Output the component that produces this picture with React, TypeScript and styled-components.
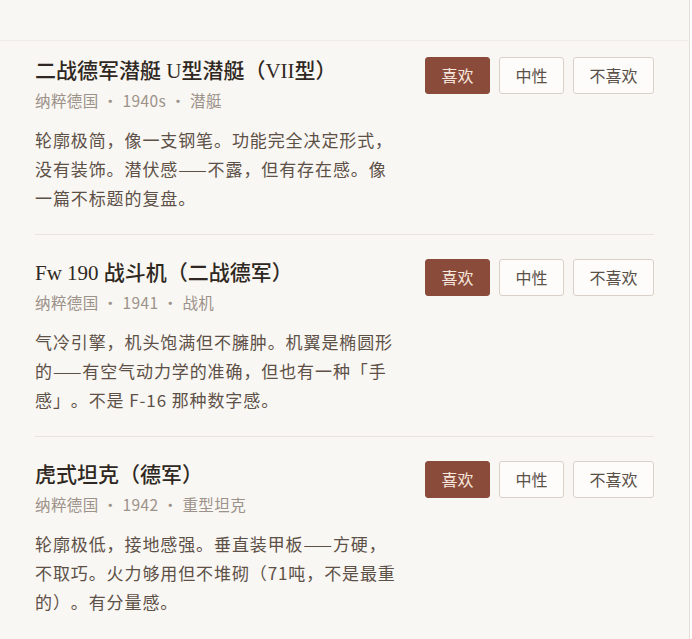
import React from "react";
import styled, { createGlobalStyle } from "styled-components";

const Global = createGlobalStyle`
  html, body { margin: 0; padding: 0; background: #ffffff; }
  body {
    font-family: "Noto Sans CJK SC", "Noto Sans", sans-serif;
    text-spacing-trim: space-all;
  }
`;

const Page = styled.div`
  width: 690px;
  min-height: 639px;
  background: #f9f7f3;
  border-right: 1px solid #e4dfd8;
  box-sizing: border-box;
`;

const TopStrip = styled.div`
  height: 41px;
  border-bottom: 1px solid #f0ece6;
  box-sizing: border-box;
`;

const List = styled.div`
  display: flex;
  flex-direction: column;
  padding: 0 35px 0 35px;
`;

const Item = styled.div`
  display: flex;
  justify-content: space-between;
  align-items: flex-start;
  padding: 24px 0 22px;
  border-bottom: 1px solid #e9e4dd;
  &:first-child { padding-top: 16px; }
  &:last-child { border-bottom: none; }
`;

const Info = styled.div`
  display: flex;
  flex-direction: column;
  width: 362px;
`;

const Title = styled.div`
  font-family: "Liberation Serif", "Noto Sans CJK SC", serif;
  font-size: 21px;
  line-height: 28px;
  font-weight: 500;
  color: #2f2822;
`;

const Meta = styled.div`
  margin-top: 4px;
  font-size: 15.5px;
  line-height: 22px;
  color: #9c928a;
  letter-spacing: 0.4px;
`;

const Dot = styled.span`
  margin: 0 4px;
`;

const Desc = styled.p`
  margin: 14px 0 0;
  font-size: 17px;
  line-height: 29px;
  letter-spacing: 0.9px;
  color: #5d5047;
`;

const Actions = styled.div`
  display: flex;
  gap: 9px;
  margin-top: 0;
`;

const Btn = styled.button<{ $active?: boolean }>`
  font-family: "Noto Sans CJK SC", sans-serif;
  font-size: 16px;
  line-height: 19px;
  padding: 8px 15.5px;
  border-radius: 3px;
  border: 1px solid ${(p) => (p.$active ? "#8a4b3b" : "#d9d1c7")};
  background: ${(p) => (p.$active ? "#8a4b3b" : "#fdfcfa")};
  color: ${(p) => (p.$active ? "#f6e7dd" : "#5a5048")};
  cursor: pointer;
`;

type Entry = {
  title: string;
  meta: string[];
  desc: string;
};

const entries: Entry[] = [
  {
    title: "二战德军潜艇 U型潜艇（VII型）",
    meta: ["纳粹德国", "1940s", "潜艇"],
    desc: "轮廓极简，像一支钢笔。功能完全决定形式，没有装饰。潜伏感——不露，但有存在感。像一篇不标题的复盘。",
  },
  {
    title: "Fw 190 战斗机（二战德军）",
    meta: ["纳粹德国", "1941", "战机"],
    desc: "气冷引擎，机头饱满但不臃肿。机翼是椭圆形的——有空气动力学的准确，但也有一种「手感」。不是 F-16 那种数字感。",
  },
  {
    title: "虎式坦克（德军）",
    meta: ["纳粹德国", "1942", "重型坦克"],
    desc: "轮廓极低，接地感强。垂直装甲板——方硬，不取巧。火力够用但不堆砌（71吨，不是最重的）。有分量感。",
  },
];

export default function App() {
  return (
    <Page>
      <Global />
      <TopStrip />
      <List>
        {entries.map((e) => (
          <Item key={e.title}>
            <Info>
              <Title>{e.title}</Title>
              <Meta>
                {e.meta.map((m, i) => (
                  <React.Fragment key={m}>
                    {i > 0 && <Dot>·</Dot>}
                    {m}
                  </React.Fragment>
                ))}
              </Meta>
              <Desc>{e.desc}</Desc>
            </Info>
            <Actions>
              <Btn $active>喜欢</Btn>
              <Btn>中性</Btn>
              <Btn>不喜欢</Btn>
            </Actions>
          </Item>
        ))}
      </List>
    </Page>
  );
}
